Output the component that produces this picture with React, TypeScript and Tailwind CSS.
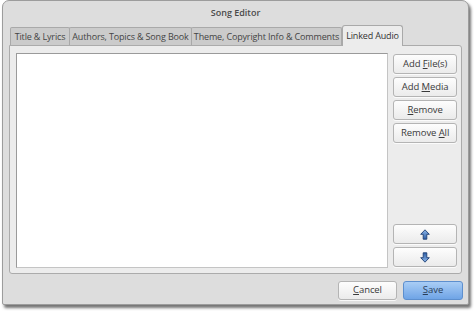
import React from "react";

const font = { fontFamily: '"Open Sans", "Noto Sans", "DejaVu Sans", sans-serif' };

function Btn({ children, cls = "" }: { children: React.ReactNode; cls?: string }) {
  return (
    <div
      className={
        "h-[20px] flex items-center justify-center rounded-[3px] border border-[#b4b4b4] bg-gradient-to-b from-[#fdfdfd] to-[#ebebeb] text-[9.5px] tracking-[-0.1px] text-[#3a3a3a] whitespace-nowrap shadow-[0_1px_0_rgba(255,255,255,0.8)] " +
        cls
      }
    >
      <span>{children}</span>
    </div>
  );
}

function Arrow({ down = false }: { down?: boolean }) {
  const id = down ? "gd" : "gu";
  return (
    <svg width="10" height="11" viewBox="0 0 10 11" style={{ display: "block", transform: down ? "rotate(180deg)" : undefined }}>
      <defs>
        <linearGradient id={id} x1="0" y1="0" x2="0" y2="1">
          <stop offset="0" stopColor="#8fb8ea" />
          <stop offset="1" stopColor="#2d5fa8" />
        </linearGradient>
      </defs>
      <path
        d="M5 0.8 L9.3 5.3 L6.8 5.3 L6.8 10.2 L3.2 10.2 L3.2 5.3 L0.7 5.3 Z"
        fill={`url(#${id})`}
        stroke="#1f3f74"
        strokeWidth="0.9"
        strokeLinejoin="round"
      />
    </svg>
  );
}

export default function App() {
  const inactive =
    "h-[18px] flex items-center justify-center bg-[#cbcbcb] border border-[#a9a9a9] border-b-0 text-[9px] tracking-[-0.15px] text-[#444] whitespace-nowrap -mr-[1px] rounded-t-[2px]";
  return (
    <div className="w-[474px] h-[312px] bg-white" style={font}>
      <div className="ml-[2px] w-[467px] h-[305px] bg-[#dddddd] border border-[#9c9c9c] rounded-t-[7px] rounded-b-[2px] shadow-[2px_3px_3px_rgba(0,0,0,0.55)] flex flex-col">
        <div className="h-[23px] flex items-center justify-center text-[9px] font-semibold text-[#4a4a4a] whitespace-nowrap">
          Song Editor
        </div>
        <div className="flex items-end pl-[7px] h-[21px]">
          <div className={inactive + " w-[60px]"}>Title &amp; Lyrics</div>
          <div className={inactive + " w-[123px]"}>Authors, Topics &amp; Song Book</div>
          <div className={inactive + " w-[151px]"}>Theme, Copyright Info &amp; Comments</div>
          <div className="w-[61px] h-[21px] flex items-center justify-center bg-[#ececec] border border-[#a9a9a9] border-b-0 text-[9px] tracking-[-0.15px] text-[#333] whitespace-nowrap rounded-t-[3px] relative z-10 -mb-[1px] ml-[1px]">
            Linked Audio
          </div>
        </div>
        <div className="mx-[6px] h-[229px] bg-[#ececec] border border-[#ababab] rounded-b-[3px] rounded-tr-[3px] flex pl-[6px] pr-[4px] pt-[7px] pb-[5px] gap-[5px]">
          <div className="w-[374px] h-[215px] bg-white border border-[#9a9a9a] border-r-[#c4c4c4] border-b-[#c4c4c4]" />
          <div className="w-[64px] flex flex-col pt-[1px]">
            <Btn>
              Add <span className="underline">F</span>ile(s)
            </Btn>
            <Btn cls="mt-[3px]">
              Add <span className="underline">M</span>edia
            </Btn>
            <Btn cls="mt-[3px]">
              <span className="underline">R</span>emove
            </Btn>
            <Btn cls="mt-[3px]">
              Remove <span className="underline">A</span>ll
            </Btn>
            <div className="flex-1" />
            <Btn cls="mb-[3px]">
              <Arrow />
            </Btn>
            <Btn cls="mb-[1px]">
              <Arrow down />
            </Btn>
          </div>
        </div>
        <div className="flex justify-end gap-[6px] pr-[5px] pt-[7px]">
          <Btn cls="w-[59px] !h-[19px]">
            <span className="underline">C</span>ancel
          </Btn>
          <div className="w-[60px] h-[19px] flex items-center justify-center rounded-[3px] border border-[#5d8fce] bg-gradient-to-b from-[#a9cdf5] to-[#6fa4e6] text-[9.5px] text-[#2a3f5a]">
            <span>
              <span className="underline">S</span>ave
            </span>
          </div>
        </div>
      </div>
    </div>
  );
}
